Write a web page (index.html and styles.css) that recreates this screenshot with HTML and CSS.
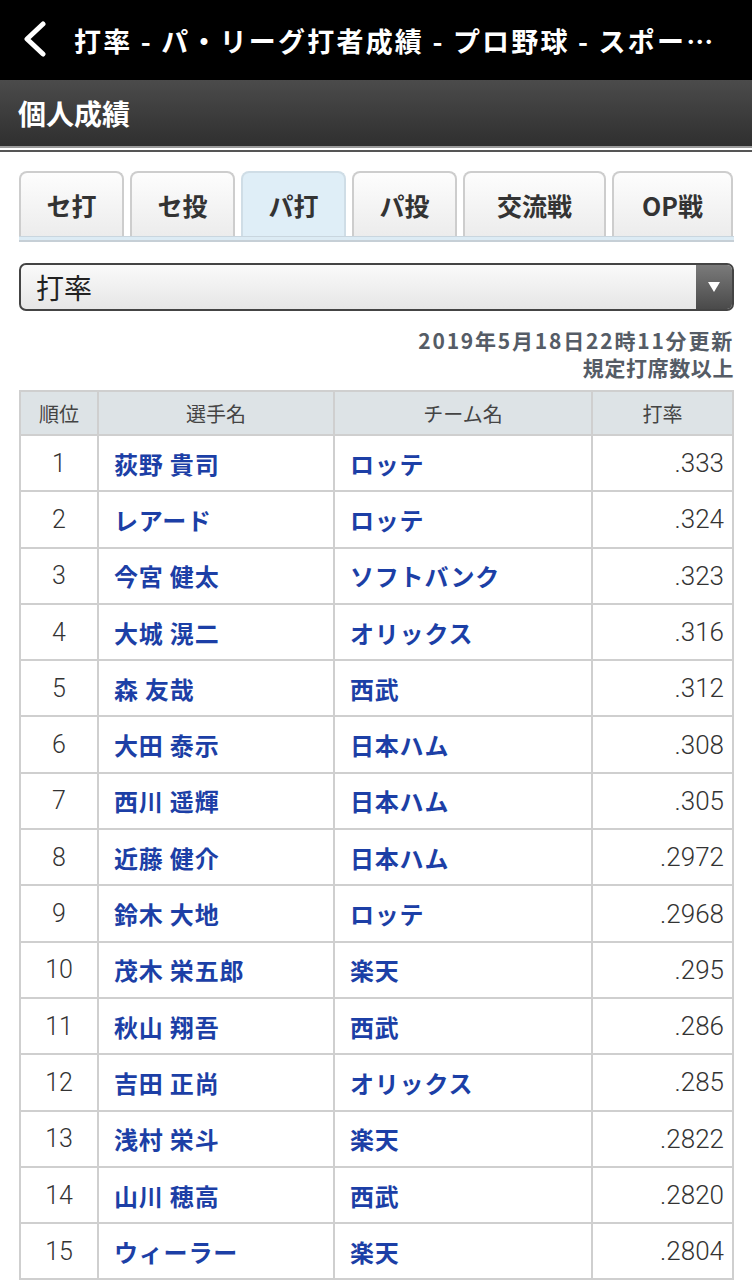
FILE: index.html
```html
<!DOCTYPE html>
<html lang="ja">
<head>
<meta charset="utf-8">
<title>打率 - パ・リーグ打者成績</title>
<link rel="stylesheet" href="styles.css">
</head>
<body>
<header class="topbar">
  <svg class="back" width="26" height="36" viewBox="0 0 26 36"><path d="M22 3 L6 18 L22 33" fill="none" stroke="#fff" stroke-width="5" stroke-linecap="round" stroke-linejoin="round"/></svg>
  <h1 class="title">打率 - パ・リーグ打者成績 - プロ野球 - スポー…</h1>
</header>
<div class="section-head"><h2>個人成績</h2></div>
<div class="section-rule"></div>
<main class="content">
  <nav class="tabs">
    <a class="tab t1">セ打</a>
    <a class="tab t1">セ投</a>
    <a class="tab t1 active">パ打</a>
    <a class="tab t1">パ投</a>
    <a class="tab t2">交流戦</a>
    <a class="tab t3">OP戦</a>
  </nav>
  <div class="tabs-base"></div>
  <div class="select">
    <span class="select-label">打率</span>
    <span class="select-arrow"><svg width="14" height="12" viewBox="0 0 14 12"><path d="M1 1 H13 L7 11 Z" fill="#fff"/></svg></span>
  </div>
  <div class="updated">
    <p class="date">2019年5月18日22時11分更新</p>
    <p>規定打席数以上</p>
  </div>
  <table class="stats">
    <thead>
      <tr><th class="c-rank">順位</th><th class="c-name">選手名</th><th class="c-team">チーム名</th><th class="c-val">打率</th></tr>
    </thead>
    <tbody>
      <tr><td class="rank">1</td><td class="link">荻野 貴司</td><td class="link">ロッテ</td><td class="val">.333</td></tr>
      <tr><td class="rank">2</td><td class="link">レアード</td><td class="link">ロッテ</td><td class="val">.324</td></tr>
      <tr><td class="rank">3</td><td class="link">今宮 健太</td><td class="link">ソフトバンク</td><td class="val">.323</td></tr>
      <tr><td class="rank">4</td><td class="link">大城 滉二</td><td class="link">オリックス</td><td class="val">.316</td></tr>
      <tr><td class="rank">5</td><td class="link">森 友哉</td><td class="link">西武</td><td class="val">.312</td></tr>
      <tr><td class="rank">6</td><td class="link">大田 泰示</td><td class="link">日本ハム</td><td class="val">.308</td></tr>
      <tr><td class="rank">7</td><td class="link">西川 遥輝</td><td class="link">日本ハム</td><td class="val">.305</td></tr>
      <tr><td class="rank">8</td><td class="link">近藤 健介</td><td class="link">日本ハム</td><td class="val">.2972</td></tr>
      <tr><td class="rank">9</td><td class="link">鈴木 大地</td><td class="link">ロッテ</td><td class="val">.2968</td></tr>
      <tr><td class="rank">10</td><td class="link">茂木 栄五郎</td><td class="link">楽天</td><td class="val">.295</td></tr>
      <tr><td class="rank">11</td><td class="link">秋山 翔吾</td><td class="link">西武</td><td class="val">.286</td></tr>
      <tr><td class="rank">12</td><td class="link">吉田 正尚</td><td class="link">オリックス</td><td class="val">.285</td></tr>
      <tr><td class="rank">13</td><td class="link">浅村 栄斗</td><td class="link">楽天</td><td class="val">.2822</td></tr>
      <tr><td class="rank">14</td><td class="link">山川 穂高</td><td class="link">西武</td><td class="val">.2820</td></tr>
      <tr><td class="rank">15</td><td class="link">ウィーラー</td><td class="link">楽天</td><td class="val">.2804</td></tr>
    </tbody>
  </table>
</main>
</body>
</html>
```

FILE: styles.css
```css
* { box-sizing: border-box; }
html, body { margin: 0; padding: 0; background: #fff; }
body {
  font-family: "Noto Sans CJK JP", "Noto Sans", sans-serif;
  color: #333;
  width: 752px;
  overflow: hidden;
}
.topbar {
  height: 80px;
  background: #000;
  display: flex;
  align-items: center;
  padding-left: 21px;
  gap: 27px;
}
.back { flex: none; margin-top: -2px; }
.title {
  margin: 0;
  font-size: 27px;
  font-weight: 700;
  color: #fff;
  white-space: nowrap;
  letter-spacing: 2.2px;
  line-height: 1;
}
.section-head {
  height: 66px;
  background: linear-gradient(#4b4b4b, #2f2f2f);
  display: flex;
  align-items: center;
  padding-left: 18px;
}
.section-head h2 {
  margin: 0;
  color: #fff;
  font-size: 28px;
  font-weight: 700;
  line-height: 1;
}
.section-rule {
  height: 6px;
  border-top: 2px solid #9a9a9a;
  border-bottom: 2px solid #555;
  background: #fff;
}
.content { padding: 19px 18px 0 19px; }
.tabs {
  display: flex;
  gap: 6px;
  height: 65px;
  align-items: stretch;
}
.tab {
  border: 2px solid #cdcdcd;
  border-bottom: none;
  border-radius: 8px 8px 0 0;
  background: linear-gradient(#fdfdfd, #ececec);
  display: flex;
  align-items: center;
  justify-content: center;
  font-size: 25px;
  font-weight: 700;
  color: #333;
}
.t1 { width: 105px; }
.t2 { width: 143px; }
.t3 { width: 121px; }
.tab.active { background: #dfeef7; border-color: #cfdde6; }
.tabs-base {
  height: 6px;
  background: #dcebf4;
  border-top: 1px solid #c9d6df;
  border-bottom: 2px solid #c6cfd6;
}
.select {
  margin-top: 21px;
  height: 48px;
  border: 2px solid #444;
  border-radius: 7px;
  display: flex;
  overflow: hidden;
  background: linear-gradient(#fafafa, #e6e6e6);
}
.select-label {
  flex: 1;
  display: flex;
  align-items: center;
  padding-left: 15px;
  font-size: 28px;
  color: #222;
}
.select-arrow {
  width: 36px;
  background: linear-gradient(#7a7a7a, #4a4a4a);
  display: flex;
  align-items: center;
  justify-content: center;
}
.updated {
  margin-top: 16px;
  text-align: right;
  color: #555c66;
  font-size: 21px;
  font-weight: 700;
  letter-spacing: 0.6px;
  line-height: 27px;
}
.updated p { margin: 0; }
.updated .date { letter-spacing: 1.8px; }
.stats {
  margin-top: 9px;
  width: 100%;
  border-collapse: collapse;
  table-layout: fixed;
}
.stats th, .stats td { border: 2px solid #cfcfcf; }
.stats th {
  background: #dde3e6;
  height: 44px;
  font-weight: 400;
  font-size: 20px;
  color: #444;
  padding: 0;
}
.c-rank { width: 78px; }
.c-name { width: 236px; }
.c-team { width: 258px; }
.stats td { height: 56.3px; padding: 0; }
.rank {
  text-align: center;
  font-family: Roboto, "Noto Sans CJK JP", sans-serif;
  font-weight: 300;
  font-size: 25px;
  color: #333;
}
.link {
  padding-left: 15px !important;
  color: #1c3fa6;
  font-weight: 700;
  font-size: 24px;
  letter-spacing: 0.8px;
}
.val {
  text-align: right;
  padding-right: 8px !important;
  font-family: Roboto, "Noto Sans CJK JP", sans-serif;
  font-weight: 300;
  font-size: 26px;
  color: #333;
}
```
